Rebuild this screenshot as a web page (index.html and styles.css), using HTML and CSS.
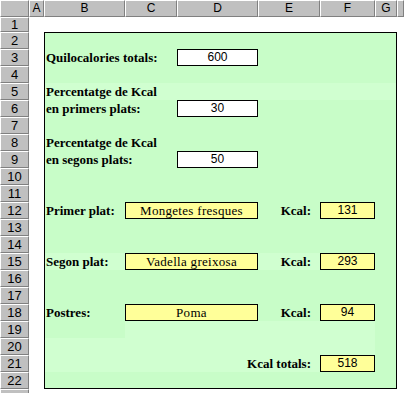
FILE: index.html
```html
<!DOCTYPE html>
<html lang="ca">
<head>
    <meta charset="UTF-8">
    <meta name="viewport" content="width=device-width, initial-scale=1.0">
    <title>Calculadora de Kcal</title>
    <link rel="stylesheet" href="styles.css">
</head>
<body>
    <div class="sheet">
        <div class="corner"></div>
        <div class="colhead">A</div>
        <div class="colhead">B</div>
        <div class="colhead">C</div>
        <div class="colhead">D</div>
        <div class="colhead">E</div>
        <div class="colhead">F</div>
        <div class="colhead">G</div>
        <div class="colhead"></div>

        <div class="rowhead r1">1</div>
        <div class="rowhead r2">2</div>
        <div class="rowhead r3">3</div>
        <div class="rowhead r4">4</div>
        <div class="rowhead r5">5</div>
        <div class="rowhead r6">6</div>
        <div class="rowhead r7">7</div>
        <div class="rowhead r8">8</div>
        <div class="rowhead r9">9</div>
        <div class="rowhead r10">10</div>
        <div class="rowhead r11">11</div>
        <div class="rowhead r12">12</div>
        <div class="rowhead r13">13</div>
        <div class="rowhead r14">14</div>
        <div class="rowhead r15">15</div>
        <div class="rowhead r16">16</div>
        <div class="rowhead r17">17</div>
        <div class="rowhead r18">18</div>
        <div class="rowhead r19">19</div>
        <div class="rowhead r20">20</div>
        <div class="rowhead r21">21</div>
        <div class="rowhead r22">22</div>
        <div class="rowhead r23"></div>

        <div class="form">
            <div class="band band5"></div>
            <div class="band band15"></div>
            <div class="band band19"></div>
            <div class="band band20"></div>

            <div class="lbl row3">Quilocalories totals:</div>
            <div class="val white row3 colD">600</div>

            <div class="lbl row5">Percentatge de Kcal</div>
            <div class="lbl row6">en primers plats:</div>
            <div class="val white row6 colD">30</div>

            <div class="lbl row8">Percentatge de Kcal</div>
            <div class="lbl row9">en segons plats:</div>
            <div class="val white row9 colD">50</div>

            <div class="lbl row12">Primer plat:</div>
            <div class="val yellow dish row12">Mongetes fresques</div>
            <div class="lbl kcal row12">Kcal:</div>
            <div class="val yellow row12 colF">131</div>

            <div class="lbl row15">Segon plat:</div>
            <div class="val yellow dish row15">Vadella greixosa</div>
            <div class="lbl kcal row15">Kcal:</div>
            <div class="val yellow row15 colF">293</div>

            <div class="lbl row18">Postres:</div>
            <div class="val yellow dish row18">Poma</div>
            <div class="lbl kcal row18">Kcal:</div>
            <div class="val yellow row18 colF">94</div>

            <div class="lbl kcal total row21">Kcal totals:</div>
            <div class="val yellow row21 colF">518</div>
        </div>
    </div>
</body>
</html>
```

FILE: styles.css
```css
body{
    margin: 0;
    background-color: #fff;
    font-family: "Liberation Sans", Arial, sans-serif;
    overflow: hidden;
}

.sheet{
    display: grid;
    grid-template-columns: 29px 15px 81px 52px 81px 62px 55px 22px 7px;
    grid-template-rows: 17px 15px repeat(22, 17px);
    height: 393px;
    overflow: hidden;
}

.corner,
.colhead,
.rowhead{
    box-sizing: border-box;
    background-color: #c0c0c0;
    border-top: 1px solid #fff;
    border-left: 1px solid #fff;
    border-right: 1px solid #808080;
    border-bottom: 1px solid #808080;
    color: #000;
    font-size: 12px;
    text-align: center;
}

.colhead{
    line-height: 15px;
}

.rowhead{
    grid-column: 1;
    font-size: 13px;
    line-height: 15px;
}

.r1{ grid-row: 2; line-height: 13px; }
.r2{ grid-row: 3; }
.r3{ grid-row: 4; }
.r4{ grid-row: 5; }
.r5{ grid-row: 6; }
.r6{ grid-row: 7; }
.r7{ grid-row: 8; }
.r8{ grid-row: 9; }
.r9{ grid-row: 10; }
.r10{ grid-row: 11; }
.r11{ grid-row: 12; }
.r12{ grid-row: 13; }
.r13{ grid-row: 14; }
.r14{ grid-row: 15; }
.r15{ grid-row: 16; }
.r16{ grid-row: 17; }
.r17{ grid-row: 18; }
.r18{ grid-row: 19; }
.r19{ grid-row: 20; }
.r20{ grid-row: 21; }
.r21{ grid-row: 22; }
.r22{ grid-row: 23; }
.r23{ grid-row: 24; }

/* green block B2:G22 */
.form{
    grid-column: 3 / 9;
    grid-row: 3 / 24;
    border: 1px solid #000;
    background-color: #c8fdc8;
    display: grid;
    grid-template-columns: 80px 52px 81px 62px 55px 21px;
    grid-template-rows: 16px repeat(19, 17px) 16px;
}

.band{
    background-color: #d0ffd0;
}
.band5{ grid-row: 4; grid-column: 1 / 7; }
.band15{ grid-row: 14; grid-column: 1 / 6; }
.band19{ grid-row: 18; grid-column: 2 / 6; }
.band20{ grid-row: 19 / 21; grid-column: 1 / 6; }

.lbl{
    grid-column: 1 / 4;
    padding-left: 1px;
    font-family: "Liberation Serif", "Times New Roman", serif;
    font-weight: bold;
    font-size: 13px;
    line-height: 17px;
    white-space: nowrap;
}

.kcal{
    grid-column: 4;
    text-align: right;
    padding-right: 9px;
}

.total{
    grid-column: 2 / 5;
}

.val{
    box-sizing: border-box;
    border: 1px solid #000;
    text-align: center;
    font-size: 12px;
    line-height: 15px;
    white-space: nowrap;
}

.white{
    background-color: #fff;
}

.yellow{
    background-color: #ffff99;
}

.dish{
    grid-column: 2 / 4;
    font-family: "Liberation Serif", "Times New Roman", serif;
    font-size: 13px;
    letter-spacing: 0.3px;
}

.colD{ grid-column: 3; }
.colF{ grid-column: 5; }

.row3{ grid-row: 2; }
.row5{ grid-row: 4; }
.row6{ grid-row: 5; }
.row8{ grid-row: 7; }
.row9{ grid-row: 8; }
.row12{ grid-row: 11; }
.row15{ grid-row: 14; }
.row18{ grid-row: 17; }
.row21{ grid-row: 20; }
```
